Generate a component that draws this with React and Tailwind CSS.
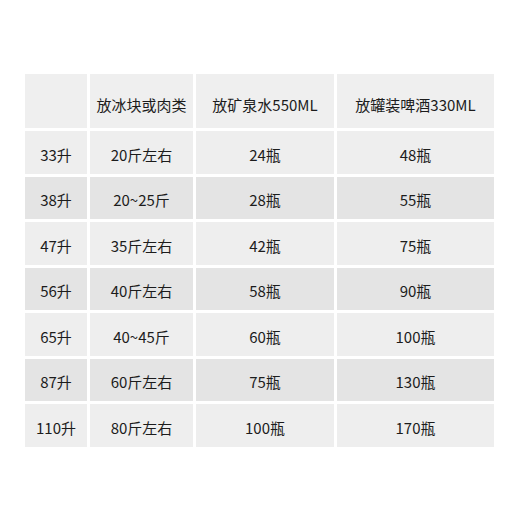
const rows = [
  ["33升", "20斤左右", "24瓶", "48瓶"],
  ["38升", "20~25斤", "28瓶", "55瓶"],
  ["47升", "35斤左右", "42瓶", "75瓶"],
  ["56升", "40斤左右", "58瓶", "90瓶"],
  ["65升", "40~45斤", "60瓶", "100瓶"],
  ["87升", "60斤左右", "75瓶", "130瓶"],
  ["110升", "80斤左右", "100瓶", "170瓶"],
];

const headers = ["", "放冰块或肉类", "放矿泉水550ML", "放罐装啤酒330ML"];

function App() {
  return (
    <div
      className="w-[520px] h-[520px] bg-white pt-[74px] pl-[25px] text-[15px] text-[#1c1c1c]"
      style={{ fontFamily: '"Noto Sans CJK SC", "Noto Sans", sans-serif' }}
    >
      <div className="grid grid-cols-[62px_103px_138px_157px] gap-[3px]">
        {headers.map((h, i) => (
          <div key={i} className="h-[54px] bg-[#efefef] flex items-center justify-center pt-[8px]">
            {h}
          </div>
        ))}
        {rows.map((row, r) =>
          row.map((cell, c) => (
            <div
              key={r + "-" + c}
              className={
                "h-[42.5px] flex items-center justify-center pt-[5px] " +
                (r % 2 === 1 ? "bg-[#e4e4e4]" : "bg-[#eeeeee]")
              }
            >
              {cell}
            </div>
          ))
        )}
      </div>
    </div>
  );
}

export default App;
